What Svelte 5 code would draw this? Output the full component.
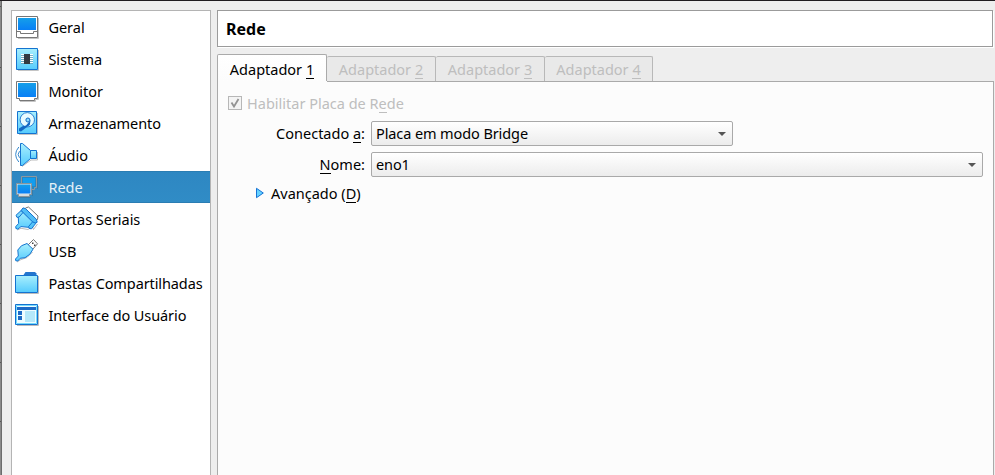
<script>
  const items = [
    { id: 'general', label: 'Geral', ls: 0 },
    { id: 'system', label: 'Sistema', ls: 0 },
    { id: 'display', label: 'Monitor', ls: 0 },
    { id: 'storage', label: 'Armazenamento', ls: -0.1 },
    { id: 'audio', label: 'Áudio', ls: 0 },
    { id: 'network', label: 'Rede', ls: 0 },
    { id: 'serial', label: 'Portas Seriais', ls: -0.03 },
    { id: 'usb', label: 'USB', ls: 0 },
    { id: 'folders', label: 'Pastas Compartilhadas', ls: -0.1 },
    { id: 'interface', label: 'Interface do Usuário', ls: -0.1 }
  ];
  let selected = $state('network');
  let tab = $state(1);
</script>

<div class="window">
  <div class="edge"></div>
  <nav>
    {#each items as item}
      <button class="item" class:selected={selected === item.id} onclick={() => (selected = item.id)}>
        <svg width="28" height="32" viewBox="0 0 28 32" fill="none">
          <defs>
            <linearGradient id="{item.id}-screen" x1="0" y1="0" x2="0" y2="1"><stop stop-color="#159fe9" /><stop offset="1" stop-color="#087ff6" /></linearGradient>
            <linearGradient id="{item.id}-light" x1="0" y1="0" x2="0" y2="1"><stop stop-color="#a9effd" /><stop offset="1" stop-color="#55cbfd" /></linearGradient>
          </defs>
          {#if item.id === 'general'}
            <path d="M4 27.5H24.5V7" stroke="#c4c4c4" />
            <path d="M2.5 5.5H23.5V26.5H2.5Z" fill="#fff" stroke="#777" />
            <path d="M4 7H22V19H4Z" fill="url(#general-screen)" />
            <path d="M3 20.5H6.5V22.5H19.5V20.5H23" stroke="#777" />
          {:else if item.id === 'system'}
            <path d="M4 27.5H24.5V7" stroke="#c4c4c4" />
            <path d="M2.5 5.5H23.5V26.5H2.5Z" fill="url(#system-light)" stroke="#1473d0" />
            <path d="M7 11.5H19M7 13.5H19M7 15.5H19M7 17.5H19M7 19.5H19" stroke="#fff" />
            <path d="M7 12.5H19M7 14.5H19M7 16.5H19M7 18.5H19M7 20.5H19" stroke="#678b9d" stroke-width=".6" />
            <path d="M10 11H16V21H10Z" fill="#343a42" />
          {:else if item.id === 'display'}
            <path d="M6 26.5H21.5V24.5H24.5V8" stroke="#c4c4c4" />
            <path d="M2.5 6.5H23.5V23.5H20.5V25.5H5.5V23.5H2.5Z" fill="#fff" stroke="#777" />
            <path d="M4 8H22V22H4Z" fill="url(#display-screen)" />
          {:else if item.id === 'storage'}
            <path d="M5 27.5H23.5V6" stroke="#c4c4c4" />
            <path d="M3.5 4.5H22.5V26.5H3.5Z" fill="url(#storage-light)" stroke="#1473d0" />
            <circle cx="13.3" cy="12.8" r="7.2" fill="#e8fbff" stroke="#2a80d4" />
            <path d="M5 21.6L8.5 19.3L12 18.6L16.6 13L15.8 18L11 21.6L7 24.6L5 24Z" fill="#1268c4" />
            <circle cx="13.9" cy="13" r="2" fill="#8edcfb" stroke="#1268c4" />
          {:else if item.id === 'audio'}
            <path d="M8 27.5L17 21H23.5V13" stroke="#bbb" />
            <path d="M6.5 4.5H8.5L16.5 11.5V19.5L8.5 26.5H6.5Z" fill="url(#audio-light)" stroke="#1473d0" />
            <path d="M16.5 11.5H22.5V19.5H16.5Z" fill="url(#audio-light)" stroke="#1473d0" />
            <path d="M4.8 8Q-1.5 15.5 4.8 23M5.5 12.2Q2.8 15.5 5.5 18.8" stroke="#3589ce" />
          {:else if item.id === 'network'}
            <path d="M23.5 7V18M18.5 14V25M5 26.5H16.5" stroke="#347ba9" />
            <path d="M7.5 5.5H22.5V16.5H20.5V18.5H9.5V16.5H7.5Z" fill="#2786c1" stroke="#8d989f" />
            <path d="M9 7H21V15H9Z" fill="#129dee" />
            <path d="M2.5 12.5H17.5V23.5H15.5V25.5H4.5V23.5H2.5Z" fill="#d6dde1" stroke="#8b959b" />
            <path d="M3 13H17V23H3Z" fill="#dfe9ef" />
            <path d="M3.5 13.5H16.5V22.5H3.5Z" fill="url(#network-screen)" />
          {:else if item.id === 'serial'}
            <path d="M11.5 5L14.5 4L24 13L23.5 16.5L21.5 17.5L10 7Z" fill="#fff" stroke="#767676" />
            <path d="M3.5 27L7 25.3L14 26.5L18.5 23.5L19.5 26.5L23.5 21" stroke="#bbb" />
            <path d="M7.5 7.5L4.2 12.5L4.6 20.5L1.8 23.5Q1 26 3.8 26.2L7 23.6L14.5 24.3L20.5 19.5Z" fill="url(#serial-light)" stroke="#1473d0" />
            <path d="M7 7.6L9 4.9L11.5 5.6L22.3 16.2L23.2 19.2L20.4 20.6Z" fill="#50bdf6" stroke="#1473d0" />
            <path d="M7 7.6L2 12.3L3 14.4L5.2 14L9 9.5Z" fill="#7cd8fa" stroke="#1473d0" />
            <path d="M18.6 18.8L14.6 23.5L15.2 25.5L17.5 25.8L21.8 20.3Z" fill="#55c5f8" stroke="#1473d0" />
          {:else if item.id === 'usb'}
            <path d="M14 10L19.5 4.5L23.5 8.8L18.5 14.5Z" fill="#fff" stroke="#777" />
            <path d="M18 8.2H19.5M20 10.2H21.5" stroke="#444" stroke-width="1.6" />
            <path d="M3 27L7 24.5L13 22.5L18.5 17" stroke="#b5b5b5" />
            <path d="M13 8.5Q6.5 9.8 3.8 15L4.3 21L1.5 24Q1 26.5 3.8 26L6.2 23.3L11 22.7Q16.5 20.2 19 14.2Z" fill="url(#usb-light)" stroke="#1473d0" />
          {:else if item.id === 'folders'}
            <path d="M3 26.5H24.5V9" stroke="#bbb" />
            <path d="M9.5 8L11.5 5H21L22.5 6.5V9H9.5Z" fill="#2476ce" />
            <path d="M1.5 8.5H23.5V25.5H1.5Z" fill="url(#folders-light)" stroke="#1473d0" />
          {:else}
            <path d="M3 26.5H24.5V7" stroke="#bbb" />
            <path d="M1.5 5.5H23.5V25.5H1.5Z" fill="#effcff" stroke="#1473d0" />
            <path d="M2.5 6.5H22.5V24.5H2.5Z" stroke="#73dafd" />
            <path d="M3 8H22V11H3ZM4 12H8V16H4ZM4 17H8V21H4Z" fill="#1c6bc7" />
            <path d="M11 12H21V23H11Z" fill="#b5e8fa" />
          {/if}
        </svg>
        <span style="letter-spacing:{item.ls}px">{item.label}</span>
      </button>
    {/each}
  </nav>

  <main>
    <h1>Rede</h1>
    <div class="tabs">
      {#each [1, 2, 3, 4] as n}
        <button class="tab" class:active={tab === n} disabled={n > 1} onclick={() => (tab = n)}><span>Adaptador <u>{n}</u></span></button>
      {/each}
    </div>
    <section>
      <div class="enable">
        <span class="check"><svg width="12" height="12" viewBox="0 0 12 12"><path d="M2.5 5.5L5 9.5L9.5 2" fill="none" stroke="#939393" stroke-width="1.8" /></svg></span>
        <span class="enable-text">Habilitar Placa de R<u>e</u>de</span>
      </div>
      <div class="field">
        <label for="attached">Conectado <u>a</u>:</label>
        <button id="attached" class="combo short"><span>Placa em modo Bridge</span><i></i></button>
      </div>
      <div class="field second">
        <label for="name"><u>N</u>ome:</label>
        <button id="name" class="combo long"><span>eno1</span><i></i></button>
      </div>
      <div class="advanced">
        <svg width="10" height="12" viewBox="0 0 10 12"><path d="M1.5 1.3V10.7L8.3 6Z" fill="#65d2ff" stroke="#1673d5" /></svg>
        <span>Avançado (<u>D</u>)</span>
      </div>
    </section>
  </main>
</div>

<style>
  :global(body) { overflow: hidden; }
  * { box-sizing: border-box; }
  .window {
    width: 995px; height: 475px; display: flex; background: #eee; overflow: hidden;
    border-top: 1px solid #201c20; color: #000; font: 14.5px/20px "Noto Sans", sans-serif;
  }
  button { font: inherit; color: inherit; border: 0; padding: 0; margin: 0; background: none; text-align: left; }
  span, label { white-space: pre; }
  u { text-decoration: none; display: inline-block; line-height: 17px; border-bottom: 1px solid currentColor; }
  .edge {
    width: 2px; margin-right: 9px;
    background: linear-gradient(90deg, transparent 1px, #6c6c6c 1px), repeating-linear-gradient(#8a8a8a 0 58px, #555 58px 59px);
    background-position: 0 0, 0 8px;
  }
  nav { width: 200px; height: 475px; margin-top: 9px; background: #fff; border: 1px solid #b4b4b4; }
  .item { display: flex; align-items: center; width: 198px; height: 32px; padding-left: 2px; }
  .item svg { flex: none; margin-right: 6.4px; }
  .item.selected { background: linear-gradient(#2e87c2, #308cc6); color: #e5f1f8; box-shadow: inset 0 1px #2a7db3, inset 0 -1px #2a7db3; }
  main { width: 777px; margin: 9px 0 0 6px; display: flex; flex-direction: column; }
  main > * { flex: none; }
  h1 { width: 776px; height: 37px; margin: 0; padding: 8px 0 0 8px; font-size: 16px; line-height: 20px; font-weight: 700; background: #fff; border: 1px solid #9b9b9b; box-shadow: 1px 1px #fff; }
  .tabs { display: flex; align-items: flex-end; height: 35px; }
  .tab { width: 109px; height: 26px; display: flex; align-items: center; justify-content: center; background: #e9e9e9; border: 1px solid #b8b8b8; border-left: 0; border-bottom-color: #aaa; color: #bebebe; border-radius: 2px 2px 0 0; }
  .tab:last-child { width: 108px; }
  .tab.active { width: 110px; height: 28px; color: #000; background: linear-gradient(#fff, #fcfcfc); border: 1px solid #aaa; border-bottom: 0; }
  section {
    width: 777px; height: 410px; border: solid #aaa; border-width: 0 1px; background: linear-gradient(#aaa, #aaa) 109px 0 / 668px 1px no-repeat #fcfcfc;
    margin-top: -1px; padding: 12px 0 0 10px;
  }
  .enable { display: flex; align-items: center; height: 20px; color: #bebebe; }
  .check { width: 14px; height: 14px; border: 1px solid #b7b7b7; background: #f4f4f4; margin-right: 5px; display: flex; }
  .field { display: flex; align-items: center; height: 25px; margin-top: 8px; }
  .second { margin-top: 6px; }
  .field label { width: 137px; text-align: right; margin-right: 6px; padding-bottom: 2px; }
  .combo { height: 25px; display: flex; align-items: center; justify-content: space-between; border: 1px solid #a9a9a9; border-radius: 2px; background: linear-gradient(#fff, #ececec); padding: 0 6px 0 4px; }
  .combo span { letter-spacing: -0.1px; padding-bottom: 2px; }
  .short { width: 362px; }
  .long { width: 612px; }
  i { width: 0; height: 0; border: 4px solid transparent; border-top: 4px solid #555; border-bottom: 0; }
  .advanced { display: flex; align-items: center; height: 20px; margin: 6px 0 0 27px; }
  .advanced svg { margin-right: 6px; }
</style>
